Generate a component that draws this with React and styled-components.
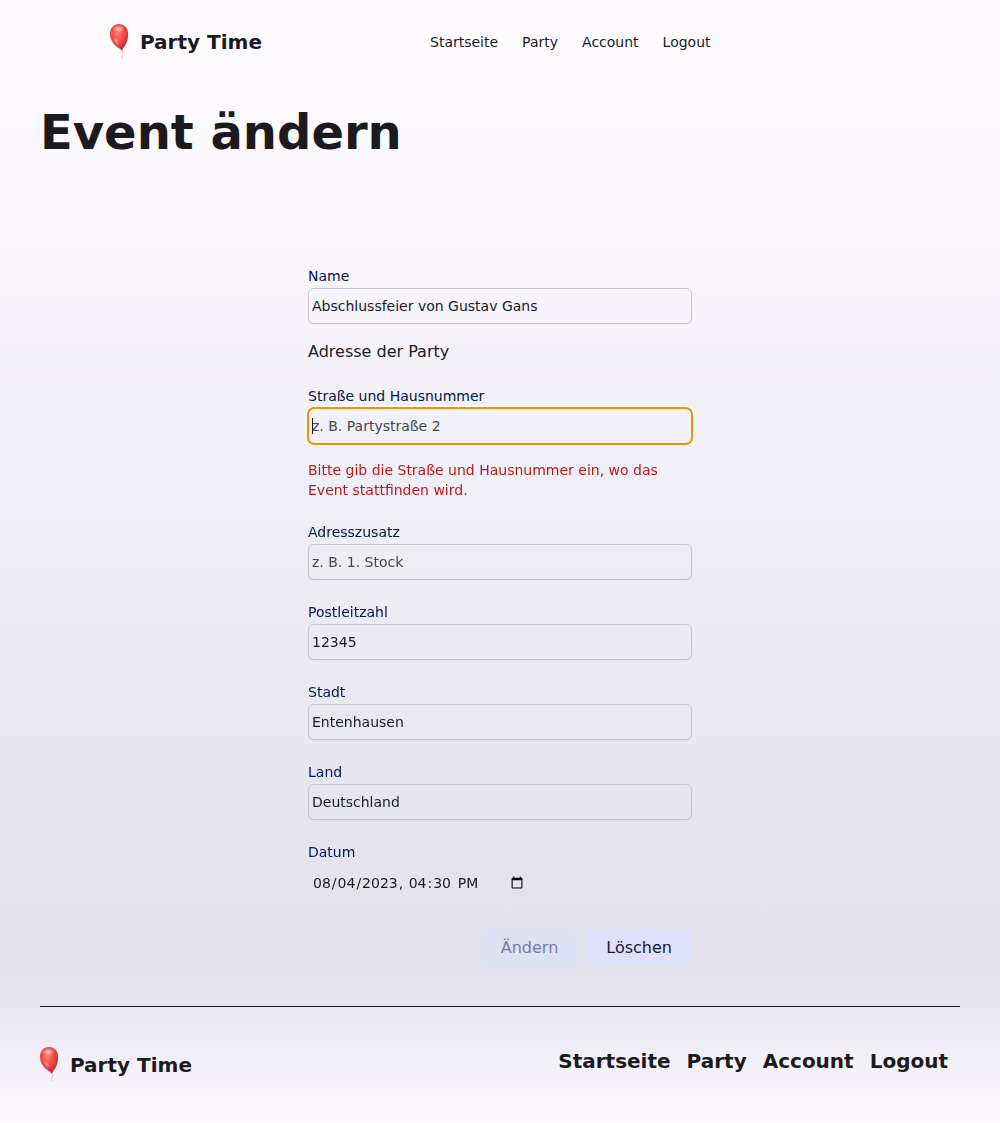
import React, { useId } from "react";
import styled, { createGlobalStyle } from "styled-components";

const GlobalStyle = createGlobalStyle`
  *, *::before, *::after { box-sizing: border-box; }
  body {
    margin: 0;
    font-family: "DejaVu Sans", sans-serif;
    font-size: 16px;
    line-height: 24px;
    color: #1b1b1f;
    background: #fefbff;
  }
  h1, p { margin: 0; }
`;

const Page = styled.div`
  height: 1123px;
  overflow: hidden;
  display: flex;
  flex-direction: column;
  background: linear-gradient(
    to bottom,
    #fefbff 0,
    #fefbff 84px,
    #edebf4 590px,
    #e3e1ec 940px,
    #e3e1ec 972px,
    #fdfaff 1123px
  );
`;

const Header = styled.header`
  display: flex;
  align-items: center;
  height: 84px;
  padding-left: 109px;
`;

const Brand = styled.div`
  display: flex;
  align-items: center;
  gap: 11px;
  width: ${(p) => p.$width};
  margin-left: ${(p) => p.$shift};
  font-size: 20px;
  line-height: 28px;
  font-weight: 700;
`;

const BalloonSvg = styled.svg`
  display: block;
  width: 20px;
  height: 36px;
  flex: none;
`;

const Nav = styled.nav`
  display: flex;
  gap: ${(p) => (p.$large ? "16px" : "24px")};
  font-size: ${(p) => (p.$large ? "20px" : "14px")};
  line-height: ${(p) => (p.$large ? "28px" : "20px")};
  font-weight: ${(p) => (p.$large ? 700 : 400)};
`;

const NavLink = styled.a`
  color: inherit;
  text-decoration: none;
`;

const Title = styled.h1`
  padding: 24px 40px 0;
  font-size: 48px;
  line-height: 48px;
  font-weight: 700;
`;

const Form = styled.form`
  display: flex;
  flex-direction: column;
  width: 384px;
  margin: 110px auto 0;
`;

const Field = styled.div`
  display: flex;
  flex-direction: column;
  margin-bottom: ${(p) => p.$gap || "22px"};
`;

const Label = styled.label`
  margin-bottom: 2px;
  font-size: 14px;
  line-height: 20px;
  color: #00174b;
`;

const Input = styled.input`
  height: 36px;
  padding: 0 3px;
  border: 1px solid #c6c5d0;
  border-radius: 6px;
  background: transparent;
  box-shadow: 0 1px 2px rgba(0, 0, 0, 0.05);
  color: #151b2c;
  font: 14px/20px "DejaVu Sans", sans-serif;
  &::placeholder { color: #46464f; opacity: 1; }
  &:focus {
    outline: 2px solid #e59700;
    outline-offset: -1px;
    box-shadow: 0 0 0 2px #fff;
    caret-color: transparent;
    background: linear-gradient(#151b2c, #151b2c) 3px 9px / 1px 16px no-repeat;
  }
`;

const DateInput = styled.input`
  width: 222px;
  height: 24px;
  margin-top: 7px;
  padding: 0 4px;
  border: 0;
  background: transparent;
  color: #151b2c;
  font: 14px/20px "DejaVu Sans", sans-serif;
  &::-webkit-datetime-edit-ampm-field { margin-left: 2px; }
`;

const Legend = styled.p`
  margin-bottom: 22px;
`;

const ErrorText = styled.p`
  margin-top: 16px;
  font-size: 14px;
  line-height: 20px;
  color: #ba1a1a;
`;

const Actions = styled.div`
  display: flex;
  justify-content: flex-end;
  gap: 8px;
  margin-top: 13px;
`;

const Button = styled.button`
  height: 36px;
  padding: 0 20px;
  border: 0;
  border-radius: 8px;
  font: 16px/24px "DejaVu Sans", sans-serif;
  color: #151b2c;
  background: #dfe0fb;
  &:disabled { color: #777e9f; background: #dee1f4; }
`;

const Footer = styled.footer`
  display: flex;
  justify-content: space-between;
  margin: 40px 40px 0;
  padding: 40px 12px 0 0;
  border-top: 1px solid #1b1b1f;
`;

const LINKS = ["Startseite", "Party", "Account", "Logout"];

function Balloon() {
  const id = useId().replace(/[^a-zA-Z0-9]/g, "");
  return (
    <BalloonSvg viewBox="0 0.300 20 36" aria-hidden="true">
      <defs>
        <radialGradient id={`${id}b`} cx="0.42" cy="0.36" r="0.68">
          <stop offset="0" stopColor="#ff8176" />
          <stop offset="0.4" stopColor="#f0534e" />
          <stop offset="0.75" stopColor="#df393b" />
          <stop offset="1" stopColor="#b82029" />
        </radialGradient>
        <radialGradient id={`${id}h`}>
          <stop offset="0" stopColor="#ffe8dc" stopOpacity="0.85" />
          <stop offset="1" stopColor="#ffb6a8" stopOpacity="0" />
        </radialGradient>
      </defs>
      <path d="M13.200 27c.8 2-.3 3.500-.3 7.500" fill="none" stroke="#cfcdd1" strokeWidth="1.100" />
      <path d="M12 25 11.400 26.500h2.600l-.8-1.500z" fill="#a93438" />
      <path d="M9.800.4C15.300.4 19.100 4.600 19.100 10.500c0 6.600-2.400 11.600-6.300 15.200C6.500 23.300 1 17.400 1 10 1 4.400 4.700.4 9.800.4z" fill={`url(#${id}b)`} />
      <ellipse cx="9.500" cy="5.200" rx="6.500" ry="4" fill={`url(#${id}h)`} />
      <ellipse cx="7.500" cy="17.500" rx="2.500" ry="5" transform="rotate(-32 7.500 17.500)" fill={`url(#${id}h)`} opacity="0.65" />
    </BalloonSvg>
  );
}

function Logo({ width, shift }) {
  return (
    <Brand $width={width} $shift={shift}>
      <Balloon />
      <span>Party Time</span>
    </Brand>
  );
}

function Links({ large }) {
  return (
    <Nav $large={large}>
      {LINKS.map((name) => (
        <NavLink key={name} href="#">{name}</NavLink>
      ))}
    </Nav>
  );
}

function TextField({ id, label, gap, error, ...input }) {
  return (
    <Field $gap={gap}>
      <Label htmlFor={id}>{label}</Label>
      <Input id={id} {...input} />
      {error && <ErrorText>{error}</ErrorText>}
    </Field>
  );
}

export default function App() {
  return (
    <>
      <GlobalStyle />
      <Page>
        <Header>
          <Logo width="321px" />
          <Links />
        </Header>
        <main>
          <Title>Event ändern</Title>
          <Form>
            <TextField id="name" label="Name" gap="16px" defaultValue="Abschlussfeier von Gustav Gans" />
            <Legend>Adresse der Party</Legend>
            <TextField
              id="street"
              label="Straße und Hausnummer"
              placeholder="z. B. Partystraße 2"
              autoFocus
              error="Bitte gib die Straße und Hausnummer ein, wo das Event stattfinden wird."
            />
            <TextField id="extra" label="Adresszusatz" placeholder="z. B. 1. Stock" />
            <TextField id="zip" label="Postleitzahl" defaultValue="12345" />
            <TextField id="city" label="Stadt" defaultValue="Entenhausen" />
            <TextField id="country" label="Land" defaultValue="Deutschland" />
            <Field>
              <Label htmlFor="date">Datum</Label>
              <DateInput id="date" type="datetime-local" defaultValue="2023-08-04T16:30" />
            </Field>
            <Actions>
              <Button type="button" disabled>Ändern</Button>
              <Button type="button">Löschen</Button>
            </Actions>
          </Form>
        </main>
        <Footer>
          <Logo shift="-1px" />
          <Links large />
        </Footer>
      </Page>
    </>
  );
}
